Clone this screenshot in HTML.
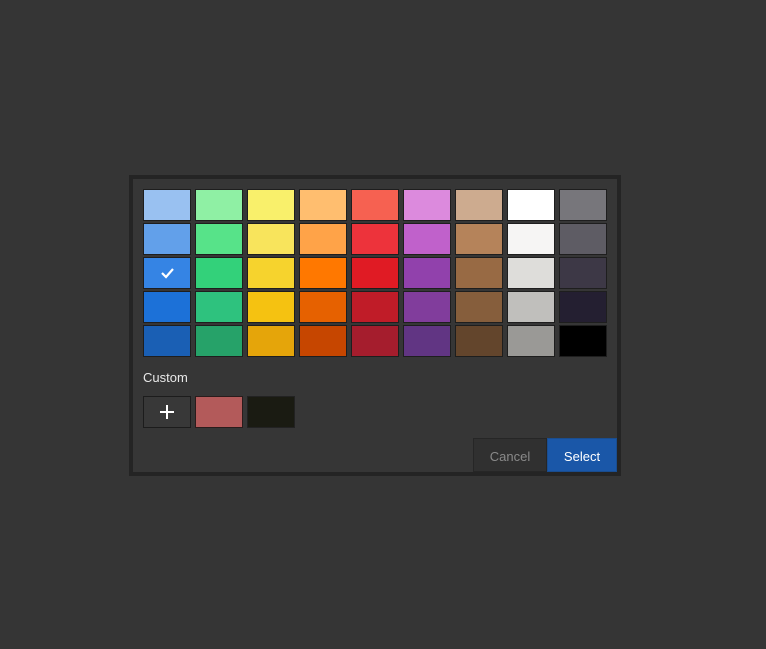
<!DOCTYPE html>
<html><head><style>
body{margin:0;width:766px;height:649px;background:#353535;position:relative;overflow:hidden;font-family:"Liberation Sans",sans-serif}
.dlg{position:absolute;left:129px;top:175px;width:484px;height:293px;border:4px solid #242424;background:#363636}
.sw{position:absolute;width:46px;height:30px;border:1px solid #1e1e1e}
.lbl{position:absolute;left:10px;top:191px;color:#e8e8e8;font-size:13px}
.btn{position:absolute;top:259px;height:32px;line-height:36px;text-align:center;font-size:13px;box-sizing:content-box}
</style></head><body>
<div class="dlg" id="d">
<div class="lbl">Custom</div>
<div class="sw" style="left:10px;top:217px;background:#383838;border-color:#1c1c1c"><svg width="46" height="30"><path d="M23 8v14M16 15h14" stroke="#fff" stroke-width="2"/></svg></div>
<div class="sw" style="left:62px;top:217px;background:#b35a5a;border-color:#2a1c1c"></div>
<div class="sw" style="left:114px;top:217px;background:#1a1b12;border-color:#222"></div>
<div class="btn" style="left:340px;width:72px;background:#303030;border:1px solid #262626;color:#8a8a8a">Cancel</div>
<div class="btn" style="left:414px;width:68px;background:#1a57a8;border:1px solid #1a4d8f;color:#fff">Select</div>
</div>
<script>
var c=[["#99c1f1","#8ff0a4","#f9f06b","#ffbe6f","#f66151","#dc8add","#cdab8f","#ffffff","#77767b"],
["#62a0ea","#57e389","#f8e45c","#ffa348","#ed333b","#c061cb","#b5835a","#f6f5f4","#5e5c64"],
["#3584e4","#33d17a","#f6d32d","#ff7800","#e01b24","#9141ac","#986a44","#deddda","#3d3846"],
["#1c71d8","#2ec27e","#f5c211","#e66100","#c01c28","#813d9c","#865e3c","#c0bfbc","#241f31"],
["#1a5fb4","#26a269","#e5a50a","#c64600","#a51d2d","#613583","#63452c","#9a9996","#000000"]];
var d=document.getElementById('d'),h='';
for(var r=0;r<5;r++)for(var i=0;i<9;i++){h+='<div class="sw" style="left:'+(10+i*52)+'px;top:'+(10+r*34)+'px;background:'+c[r][i]+'">'+(r==2&&i==0?'<svg width="46" height="30"><path d="M18 15l4 4 7-8" stroke="#fff" stroke-width="2.2" fill="none"/></svg>':'')+'</div>';}
d.insertAdjacentHTML('afterbegin',h);
</script>
</body></html>
